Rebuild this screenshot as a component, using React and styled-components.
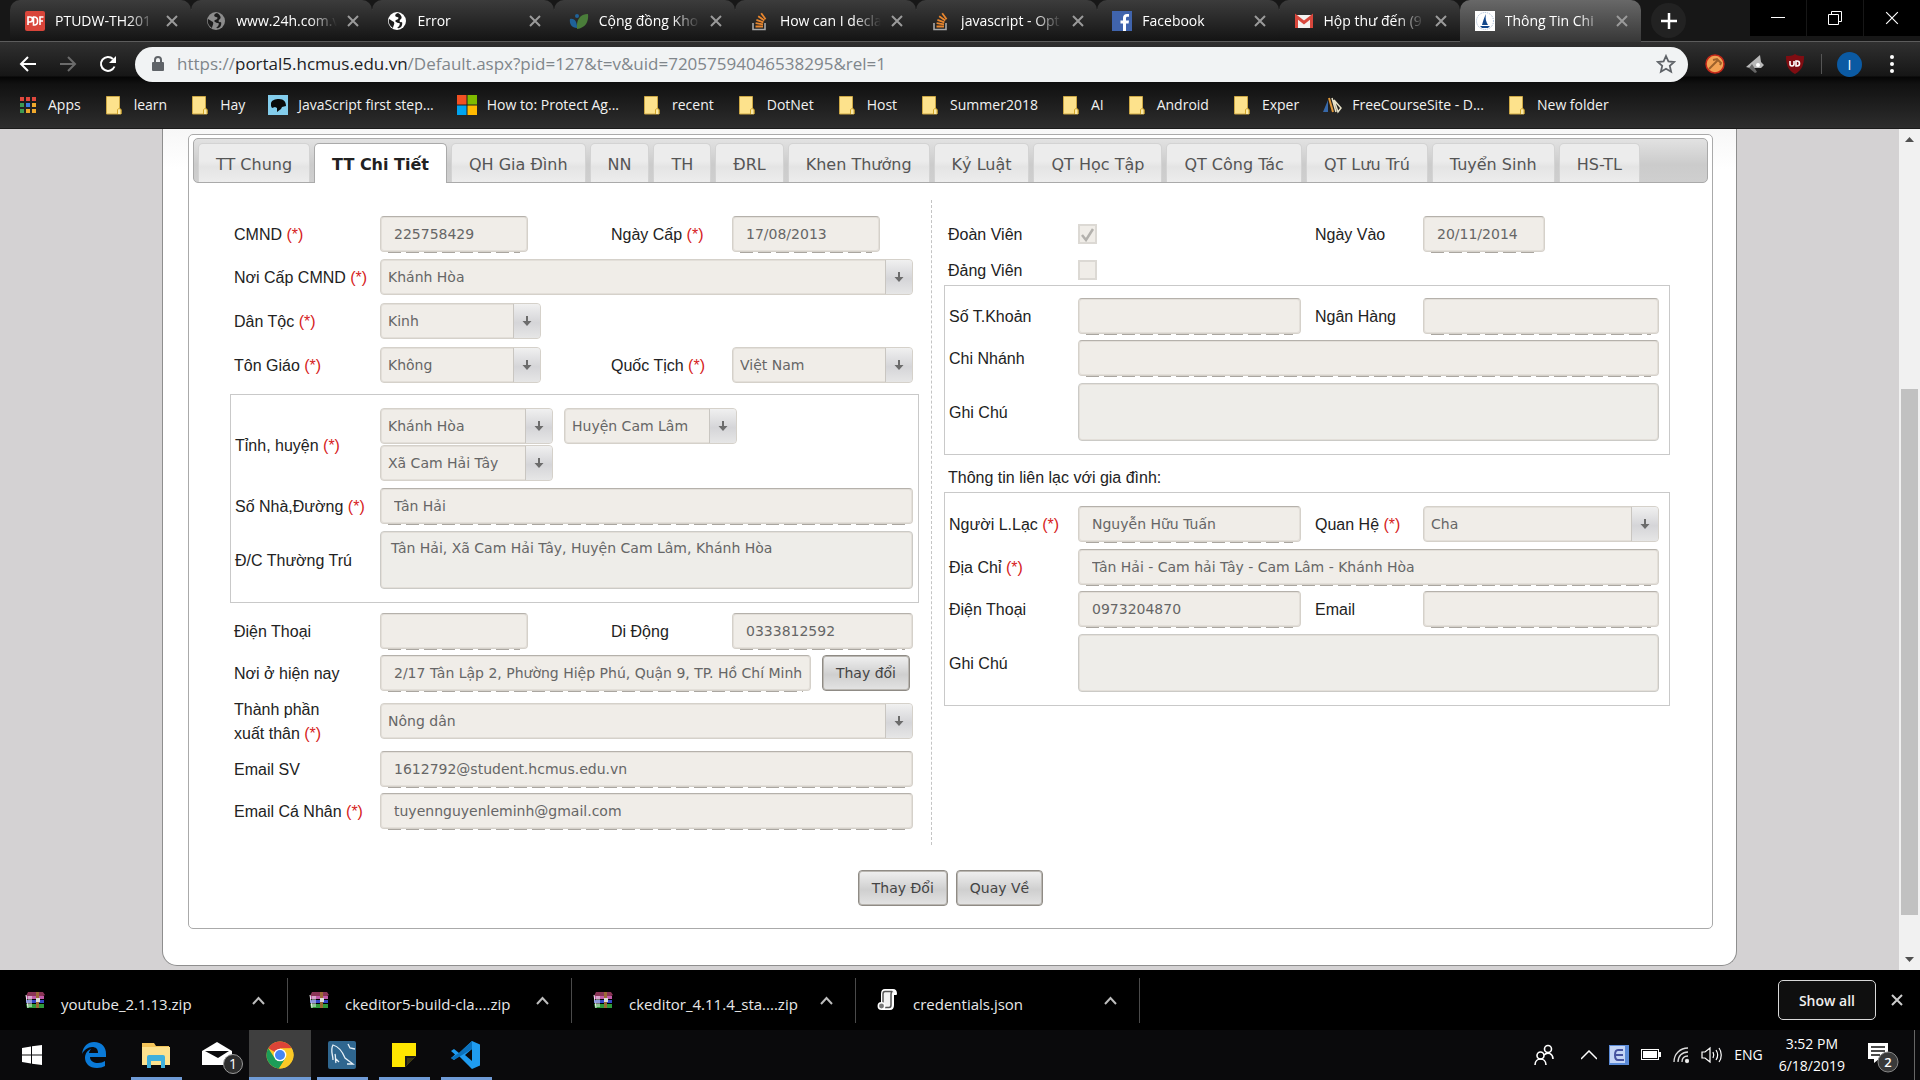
import React from 'react';
import styled, { createGlobalStyle, css } from 'styled-components';

const ui = '"Open Sans", "Noto Sans", sans-serif';
const sans = '"Liberation Sans", Arial, sans-serif';
const wide = '"DejaVu Sans", Verdana, sans-serif';

const Global = createGlobalStyle`
  *, *::before, *::after { box-sizing: border-box; }
  body { margin: 0; background: #000; font-family: ${ui}; }
  button { font: inherit; cursor: pointer; }
  svg { display: block; flex: none; }
`;

const Screen = styled.div`
  height: 100vh;
  display: flex;
  flex-direction: column;
  overflow: hidden;
`;

/* ---------- browser window ---------- */

const TabStrip = styled.header`
  display: flex;
  align-items: flex-start;
  height: 42px;
  padding-left: 10px;
  background: #171717;
  border-bottom: 1px solid #5c5c5c;
`;

const TabList = styled.div`
  display: flex;
  flex: 0 1 1631px;
  min-width: 0;
  height: 42px;
`;

const BrowserTab = styled.div`
  flex: 1 1 0;
  min-width: 0;
  display: flex;
  align-items: center;
  gap: 10px;
  height: 41px;
  padding: 0 13px 0 15px;
  border-radius: 10px 10px 0 0;
  background: linear-gradient(#3c3c3c, #141414);
  background-clip: padding-box;
  ${(p) =>
    p.$active &&
    css`
      height: 42px;
      background: linear-gradient(#686868, #373737);
    `}
`;

const TabDivider = styled.i`
  align-self: center;
  width: 1px;
  height: 25px;
  margin: 0 -1px 0 0;
  background: #5a5a5a;
`;

const TabTitle = styled.span`
  flex: 1;
  min-width: 0;
  overflow: hidden;
  white-space: nowrap;
  font-size: 14px;
  line-height: 22px;
  color: #fff;
  mask-image: linear-gradient(90deg, #000 calc(100% - 28px), transparent);
`;

const PlainButton = styled.button`
  display: flex;
  align-items: center;
  justify-content: center;
  flex: none;
  padding: 0;
  border: 0;
  background: none;
  color: inherit;
`;

const NewTab = styled(PlainButton)`
  width: 35px;
  height: 35px;
  margin: 3px 0 0 10px;
  border-radius: 50%;
  background: #222;
`;

const WindowControls = styled.div`
  display: flex;
  gap: 1px;
  margin-left: auto;
`;

const WindowButton = styled(PlainButton)`
  width: 56px;
  height: 36px;
  background: #000;
`;

const Toolbar = styled.div`
  display: flex;
  align-items: center;
  height: 42px;
  padding: 2px 18px 0 14px;
  background: linear-gradient(#303030, #161616 34px, #050505 35px, #111);
`;

const NavButtons = styled.div`
  display: flex;
  gap: 12px;
  margin-right: 13px;
`;

const NavButton = styled(PlainButton)`
  width: 28px;
  height: 28px;
`;

const AddressBar = styled.div`
  flex: 1;
  min-width: 0;
  display: flex;
  align-items: center;
  gap: 12px;
  height: 35px;
  padding: 0 12px 0 16px;
  border-radius: 18px;
  background: #f1f3f4;
`;

const Url = styled.div`
  flex: 1;
  min-width: 0;
  overflow: hidden;
  white-space: nowrap;
  font-size: 17px;
  line-height: 24px;
  color: #80868b;
  span { color: #202124; }
`;

const Extensions = styled.div`
  display: flex;
  align-items: center;
  gap: 20px;
  margin-left: 17px;
`;

const ToolbarDivider = styled.i`
  width: 1px;
  height: 20px;
  margin-left: -4px;
  background: #555;
`;

const ToolbarGap = styled.i`
  width: 1px;
  margin-right: -18px;
`;

const Avatar = styled(PlainButton)`
  width: 25px;
  height: 25px;
  border-radius: 50%;
  background: #0b5aa3;
  color: #fff;
  font-size: 14px;
  margin-left: -5px;
`;

const Bookmarks = styled.nav`
  display: flex;
  align-items: center;
  gap: 23px;
  height: 45px;
  padding: 0 18px 2px;
  background: linear-gradient(#111, #2d2d2d);
  border-bottom: 1px solid #1b1b1b;
`;

const Bookmark = styled.a`
  display: flex;
  align-items: center;
  gap: 10px;
  color: #f1f1f1;
  font-size: 14px;
  line-height: 20px;
  white-space: nowrap;
  text-decoration: none;
`;

/* ---------- web page ---------- */

const Viewport = styled.div`
  flex: 1;
  min-height: 0;
  display: flex;
  background: #d4d2d3;
`;

const PageScroll = styled.main`
  flex: 1;
  min-width: 0;
  overflow: hidden;
  padding: 0 162px;
`;

const Sheet = styled.div`
  padding: 5px 23px 36px 25px;
  border: 1px solid #8e8e8e;
  border-top: 0;
  border-radius: 0 0 15px 15px;
  background: linear-gradient(#f7f7f7, #fff 40px);
`;

const Panel = styled.section`
  padding: 3px 4px 22px;
  border: 1px solid #aaa;
  border-radius: 5px;
  background: #fff;
`;

const SectionTabs = styled.nav`
  display: flex;
  align-items: flex-end;
  gap: 4px;
  height: 45px;
  padding-left: 4px;
  border: 1px solid #aaa;
  border-radius: 5px;
  background: linear-gradient(#e2e2e2, #cbcbcb 60%, #cfcfcf);
`;

const SectionTab = styled.a`
  height: 39px;
  padding: 0 17px;
  border: 1px solid #d3d3d3;
  border-bottom: 0;
  border-radius: 5px 5px 0 0;
  background: linear-gradient(#ececec 45%, #e4e4e4 60%, #ededed);
  color: #555;
  font-family: ${wide};
  font-size: 16px;
  line-height: 41px;
  white-space: nowrap;
  text-decoration: none;
  ${(p) =>
    p.$active &&
    css`
      height: 40px;
      margin-bottom: -1px;
      border-color: #aaa;
      background: #fff;
      color: #212121;
      font-weight: bold;
    `}
`;

const Columns = styled.div`
  display: grid;
  grid-template-columns: 738fr 777fr;
  margin-top: 17px;
  font-family: ${sans};
  font-size: 16px;
  line-height: 24px;
  color: #222;
`;

const LeftColumn = styled.div`
  min-width: 0;
  padding: 13px 12px 13px 37px;
`;

const RightColumn = styled.div`
  min-width: 0;
  padding: 13px 38px 13px 12px;
  border-left: 1px dashed #c4c4c4;
`;

const rowHeights = { check: 30, input: 42, select: 44, double: 54, area: 66, stack: 81 };

const Row = styled.div`
  display: grid;
  align-items: center;
  height: ${(p) => rowHeights[p.$kind]}px;
`;

const LeftRow = styled(Row)`
  grid-template-columns: ${(p) => (p.$boxed ? 145 : 146)}px 231px 121px 1fr;
  padding: 0 ${(p) => (p.$boxed ? 5 : 6)}px 0 4px;
`;

const RightRow = styled(Row)`
  grid-template-columns: ${(p) => (p.$boxed ? 129 : 130)}px 237px 108px 1fr;
  padding: 0 ${(p) => (p.$boxed ? 10 : 11)}px 0 4px;
`;

const Box = styled.div`
  padding: 9px 0;
  margin: ${(p) => (p.$spaced ? '7px 0' : '0')};
  border: 1px solid #c9c9c9;
`;

const Caption = styled.p`
  margin: 0;
  padding: 8px 4px 0;
  line-height: 29px;
`;

const LabelText = styled.label`
  padding-top: 2px;
  white-space: nowrap;
  b { font-weight: normal; color: #d62222; }
`;

const Cell = styled.div`
  display: flex;
  align-items: center;
  gap: 11px;
  grid-column: ${(p) => (p.$span ? '2 / -1' : 'auto')};
  padding-right: ${(p) => p.$inset || 0}px;
  flex-wrap: ${(p) => (p.$wrap ? 'wrap' : 'nowrap')};
  row-gap: 1px;
`;

const control = css`
  width: 100%;
  margin: 0;
  border: 1px solid #d5d1ca;
  border-radius: 4px;
  background: #f0ede8;
  box-shadow: inset 0 0 0 1px #e3dfd9;
  color: #666;
  font-family: ${wide};
  font-size: 14px;
  opacity: 1;
`;

const InputFrame = styled.div`
  flex: ${(p) => (p.$width ? `0 1 ${p.$width}px` : '1')};
  min-width: 0;
  padding: 1px 0;
  background: repeating-linear-gradient(90deg, #aaa6a0 0 13px, transparent 13px 18px) center bottom /
    calc(100% - 16px) 1px no-repeat;
`;

const TextInput = styled.input`
  ${control}
  display: block;
  height: 36px;
  padding: 0 1px 0 13px;
  border-top-color: #b5b1ab;
`;

const TextArea = styled.textarea`
  ${control}
  display: block;
  height: 58px;
  padding: 6px 10px;
  border-color: #cbcac6;
  background: #eeede9;
  line-height: 20px;
  resize: none;
`;

const SelectFrame = styled.div`
  flex: ${(p) => (p.$width ? `0 1 ${p.$width}px` : '1')};
  min-width: 0;
  display: grid;
  grid-template-columns: 1fr 28px;
  > * { grid-row: 1; }
`;

const SelectInput = styled.select`
  ${control}
  grid-column: 1 / -1;
  height: 36px;
  padding: 0 30px 0 7px;
  appearance: none;
`;

const SelectArrow = styled.span`
  grid-column: 2;
  display: flex;
  align-items: center;
  justify-content: center;
  margin: 1px 1px 1px 0;
  border-left: 1px solid #c9c6c1;
  border-radius: 0 3px 3px 0;
  background: linear-gradient(#f0f0f0, #d5d5d8 55%, #e6e6e6);
  pointer-events: none;
`;

const CheckFrame = styled.span`
  display: grid;
  place-items: center;
  width: 19px;
  height: 20px;
  > * { grid-area: 1 / 1; }
`;

const CheckInput = styled.input`
  width: 19px;
  height: 20px;
  margin: 0;
  appearance: none;
  border: 2px solid #dcd9d4;
  background: #f0ede8;
`;

const FormButton = styled.button`
  flex: none;
  height: 36px;
  padding: 0 13px;
  border: 1px solid #8f8b85;
  border-radius: 4px;
  background: linear-gradient(#f0f0f0, #cfcfcf 55%, #e3e3e3);
  box-shadow: inset 0 0 0 1px #b9b6b1;
  color: #444;
  font-family: ${wide};
  font-size: 14px;
  white-space: nowrap;
`;

const Actions = styled.div`
  display: flex;
  justify-content: center;
  gap: 8px;
  margin-top: 25px;
`;

const Scrollbar = styled.div`
  width: 21px;
  display: flex;
  flex-direction: column;
  align-items: center;
  background: #f1f1f1;
`;

const ScrollArrow = styled(PlainButton)`
  width: 21px;
  height: 21px;
`;

const Thumb = styled.div`
  flex: 526;
  width: 17px;
  background: #c1c1c1;
`;

const Track = styled.div`
  flex: ${(p) => p.$grow};
`;

/* ---------- downloads and taskbar ---------- */

const Downloads = styled.footer`
  display: flex;
  align-items: center;
  height: 60px;
  padding: 0 16px 0 4px;
  background: #000;
`;

const Download = styled.div`
  display: flex;
  align-items: center;
  flex: 0 1 284px;
  min-width: 0;
  height: 45px;
  padding: 0 22px 0 21px;
  border-right: 1px solid #4a4a4a;
  color: #e8e8e8;
  font-size: 15px;
  line-height: 24px;
`;

const FileName = styled.span`
  flex: 1;
  padding: 7px 0 0 16px;
  white-space: nowrap;
`;

const ShowAll = styled.button`
  height: 40px;
  margin-left: auto;
  padding: 0 20px;
  border: 1px solid #d8d8d8;
  border-radius: 5px;
  background: #0f0f0f;
  color: #eee;
  font-size: 14px;
  font-weight: 600;
  white-space: nowrap;
`;

const CloseBar = styled(PlainButton)`
  width: 14px;
  height: 14px;
  margin-left: 14px;
`;

const Taskbar = styled.footer`
  display: flex;
  align-items: stretch;
  height: 50px;
  padding-left: 1px;
  background: #0a0a0c;
  color: #fff;
`;

const TaskButton = styled(PlainButton)`
  width: 62px;
  border-top: 3px solid transparent;
  border-bottom: 3px solid transparent;
  ${(p) =>
    p.$running &&
    css`
      background:
        linear-gradient(#6f9bd6, #6f9bd6) center bottom / ${p.$active ? '62px' : '51px'} 3px no-repeat border-box,
        ${p.$active ? '#3f3f3f' : 'none'};
    `}
`;

const Tray = styled.div`
  display: flex;
  align-items: center;
  margin-left: auto;
  padding-right: 5px;
  font-size: 14px;
  line-height: 22px;
`;

const TrayIcons = styled.div`
  display: flex;
  align-items: center;
  gap: 12px;
  margin: 0 11px 0 27px;
`;

const Clock = styled.div`
  margin: 0 22px 0 16px;
  text-align: center;
`;

const DesktopEdge = styled.i`
  align-self: stretch;
  width: 1px;
  margin-left: 15px;
  background: #666;
`;

/* ---------- drawings ---------- */

const Cross = ({ size = 12, color = '#9a9a9a', width = 2 }) => (
  <svg width={size} height={size} viewBox="0 0 12 12" stroke={color} strokeWidth={width}>
    <path d="M1 1l10 10M11 1L1 11" />
  </svg>
);

const PdfIcon = () => (
  <svg width="20" height="20" viewBox="0 0 20 20">
    <rect width="20" height="20" rx="2" fill="#d9453a" />
    <path
      d="M3 14V6h2a2 2 0 0 1 0 5H3M8.500 14V6h1a3 3 0 0 1 3 3v2a3 3 0 0 1-3 3zM15 14V6h3.500M15 10h3"
      fill="none" stroke="#fff" strokeWidth="1.600"
    />
  </svg>
);

const Globe = ({ color }) => (
  <svg width="20" height="20" viewBox="0 0 20 20">
    <circle cx="10" cy="10" r="9" fill={color} />
    <path d="M11 2c-4 1-3 4-1 4 3 0 1 3-1 3-2 1 1 3 3 3s0 4-2 5c4 1 6-3 5-6-3 1-3-2-1-3 2-2-1-5-3-6zM2 8c2 1 3 2 5 3 1 2-1 4-1 6-3-2-5-5-4-9z" fill="#1c1c1c" />
  </svg>
);

const Leaf = () => (
  <svg width="20" height="20" viewBox="0 0 20 20">
    <path d="M8 18C7 9 11 3 19 3c1 8-3 14-11 15z" fill="#4a7d3a" />
    <path d="M1 8c5-1 7 3 7 9-5 0-8-4-7-9z" fill="#1f6298" />
    <circle cx="8" cy="5" r="2" fill="#1f6298" />
  </svg>
);

const StackIcon = () => (
  <svg width="20" height="20" viewBox="0 0 20 20" fill="none">
    <path d="M3 12v6.500h12V12" stroke="#a9a9a9" strokeWidth="1.600" />
    <path d="M5.500 15.500h7.500M5.600 12.200l7.400 1.200M6.400 8.800l7 2.500M8.200 5.200l6.100 4.200M11.200 2.200l4.400 6" stroke="#e8862e" strokeWidth="1.800" />
  </svg>
);

const FacebookIcon = () => (
  <svg width="20" height="20" viewBox="0 0 20 20">
    <rect width="20" height="20" fill="#4064ac" />
    <path d="M11 20v-7.500H8.500v-3H11V7c0-2.800 1.500-4 4-4h2v2.800h-1.500c-1.200 0-1.500.5-1.500 1.600v2.100h3l-.4 3H14V20z" fill="#fff" />
  </svg>
);

const GmailIcon = () => (
  <svg width="20" height="20" viewBox="0 0 20 20">
    <rect x="1" y="4" width="18" height="13" rx="1" fill="#f3f1ef" />
    <path d="M2.500 17V5.500L10 11.500l7.500-6V17" fill="none" stroke="#d8473c" strokeWidth="3" />
  </svg>
);

const SchoolIcon = () => (
  <svg width="20" height="20" viewBox="0 0 20 20">
    <rect width="20" height="20" fill="#fff" />
    <circle cx="10" cy="10" r="8.500" fill="none" stroke="#9fb6d2" strokeDasharray="1 1" />
    <path d="M11 3c-1 4 0 8 2 11H7c1-4 2-7 4-11zM5 15h10l-2 2H7z" fill="#13478b" />
  </svg>
);

const FolderIcon = () => (
  <svg width="20" height="20" viewBox="0 0 20 20">
    <path d="M2.500 1.500h13v12l1.500 1v4.500H2.500z" fill="#fde28c" stroke="#cda845" />
    <path d="M13.500 19v-4.500l1.500-1 2 1V19" fill="#fbeaa9" stroke="#d6a92c" />
  </svg>
);

const AppsIcon = () => {
  const colors = ['#e0483d', '#e0483d', '#e0483d', '#3e9a52', '#3a7be0', '#f0a92c', '#3e9a52', '#f0a92c', '#f0a92c'];
  return (
    <svg width="20" height="20" viewBox="0 0 20 20">
      {colors.map((c, i) => (
        <rect key={i} x={2 + (i % 3) * 6} y={2 + Math.floor(i / 3) * 6} width="4" height="4" fill={c} />
      ))}
    </svg>
  );
};

const MdnIcon = () => (
  <svg width="20" height="20" viewBox="0 0 20 20">
    <rect width="20" height="20" fill="#83cdec" />
    <path d="M3 8c1-3 4-4 8-4 5 0 7 3 7 7l-4 1-1 2-4 3 0-4-2-1-3 1-1-2z" fill="#0a0a0a" />
  </svg>
);

const WindowsColor = () => (
  <svg width="20" height="20" viewBox="0 0 20 20">
    <rect width="9.500" height="9.500" fill="#f25022" />
    <rect x="10.500" width="9.500" height="9.500" fill="#7fba00" />
    <rect y="10.500" width="9.500" height="9.500" fill="#00a4ef" />
    <rect x="10.500" y="10.500" width="9.500" height="9.500" fill="#ffb900" />
  </svg>
);

const SailIcon = () => (
  <svg width="20" height="20" viewBox="0 0 20 20">
    <path d="M1 17L6 5v12z" fill="#3768a8" />
    <path d="M7 3l4 14" stroke="#e29a3b" strokeWidth="2" />
    <path d="M10 3l4 14M12 5l7 8-3 4z" fill="none" stroke="#e8e2c8" strokeWidth="1.500" />
  </svg>
);

const DownArrow = () => (
  <svg width="12" height="14" viewBox="0 0 12 14">
    <path d="M5 2h2v5h3.500L6 12 1.500 7H5z" fill="#6c6c6c" />
  </svg>
);

const ArchiveIcon = () => (
  <svg width="20" height="18" viewBox="0 0 20 18">
    <path d="M3 1h15l2 3-2 1H1z" fill="#8b3557" />
    <path d="M1 5h18v3H1z" fill="#c05aa8" />
    <path d="M1 9h18v3H1z" fill="#3348c8" />
    <path d="M1 13h18v4H2z" fill="#2f9a3a" />
    <path d="M1 4l2 13M4 5v11M6 5v11" stroke="#eee" />
    <path d="M11 1h3v16h-3z" fill="#9b6b35" />
    <rect x="11" y="7" width="4" height="4" fill="#ddd" />
  </svg>
);

const ScriptIcon = () => (
  <svg width="20" height="22" viewBox="0 0 20 22" fill="none" strokeLinejoin="round">
    <path d="M5 14V5c0-3 1-4 3-4h8c2 0 3 1 3 4h-3v11c0 3-1 4-3 4H5" fill="#f2f2f2" stroke="#fff" strokeWidth="2" />
    <path d="M6 14V5c0-2 1-2.500 2-2.500h7c-1 1-1 2-1 3V16c0 2-1 2.500-2 2.500H8" fill="#f2f2f2" stroke="#555" strokeWidth="1.500" />
    <circle cx="4.500" cy="17" r="3.200" fill="#777" stroke="#fff" strokeWidth="1.500" />
  </svg>
);

const Chevron = () => (
  <svg width="13" height="9" viewBox="0 0 13 9" fill="none" stroke="#bdbdbd" strokeWidth="2">
    <path d="M1 8l5.500-6L12 8" />
  </svg>
);

const EdgeIcon = () => (
  <svg width="26" height="28" viewBox="0 0 26 28">
    <path d="M1 13C2 5 7 1 13 1c8 0 12 5 12 12v3H9c0 4 4 6 8 6 3 0 5-1 7-2v5c-2 1-5 2-8 2-8 0-12-5-12-10 0-5 3-8 6-9-1 1-2 3-2 4h9c0-4-2-6-6-6-4 0-8 3-10 7z" fill="#0a7ad8" />
  </svg>
);

const ExplorerIcon = () => (
  <svg width="28" height="26" viewBox="0 0 28 26">
    <path d="M0 1h12l2 3h13v18H0z" fill="#f4c55a" />
    <path d="M0 5h28v18H0z" fill="#fde28e" />
    <path d="M5 26V15a2 2 0 0 1 2-2h14a2 2 0 0 1 2 2v11h-4v-7h-10v7z" fill="#3fb0dc" />
  </svg>
);

const MailIcon = () => (
  <svg width="54" height="38" viewBox="0 0 54 38">
    <path d="M11 15L26 6l15 9v14H11z" fill="#fff" />
    <path d="M14 15h24L27 22z" fill="#0a0a0c" />
    <circle cx="42" cy="28" r="9.500" fill="#2e2e2e" stroke="#999" />
    <text x="42" y="33" textAnchor="middle" fill="#fff" fontSize="14" fontFamily={ui}>1</text>
  </svg>
);

const ChromeIcon = () => (
  <svg width="28" height="28" viewBox="0 0 28 28">
    <circle cx="14" cy="14" r="13.500" fill="#fbc926" />
    <path d="M14 14L2.300 7.200A13.500 13.500 0 0 1 25.700 7.200L14 7.500z" fill="#dc4437" />
    <path d="M2.300 7.200A13.500 13.500 0 0 0 13 27.500L19.500 17 14 14 8 16z" fill="#1c9d58" />
    <path d="M14 7.500h11.800a13.500 13.500 0 0 1-12.800 20l7-10.500z" fill="#fbc926" />
    <circle cx="14" cy="14" r="6.300" fill="#fff" />
    <circle cx="14" cy="14" r="5" fill="#4486f4" />
  </svg>
);

const DolphinIcon = () => (
  <svg width="28" height="28" viewBox="0 0 28 28">
    <rect width="28" height="28" rx="2" fill="#2f668f" />
    <path d="M5 19c0-5-3-10 0-15 7 2 10 8 12 13l8 6-6 0M8 22c-1-3 0-6-1-9M11 21l-3-3M20 3l2 4 5 1" fill="none" stroke="#e8f1f7" strokeWidth="1.300" />
  </svg>
);

const NotesIcon = () => (
  <svg width="24" height="24" viewBox="0 0 24 24">
    <path d="M0 0h24v24H0z" fill="#ffe600" />
    <path d="M13 24V13h11z" fill="#1a1a1a" />
    <path d="M24 13v11H13z" fill="#0a0a0c" />
    <path d="M13 24V13h11z" fill="#1a1a1a" />
    <path d="M15 22v-7h7z" fill="#ffe600" opacity=".15" />
  </svg>
);

const CodeIcon = () => (
  <svg width="30" height="30" viewBox="0 0 30 30">
    <path d="M21 1l8 3.500v21L21 29 8 16l-5 4-3-2 4-3.500L0 11l3-2 5 4zM21 9l-7 6 7 6z" fill="#1f9cf0" fillRule="evenodd" />
    <path d="M0 18l3 2L21 9V1L8 13z" fill="#0b72bd" />
  </svg>
);

const StartIcon = () => (
  <svg width="20" height="22" viewBox="0 0 20 22" fill="#fff">
    <path d="M0 4l9-1.500v8H0zM10 2.300L20 1v9.500H10zM0 11.500h9v8L0 18zM10 11.500h10V21l-10-1.300z" />
  </svg>
);

/* ---------- form parts ---------- */

const Label = ({ id, text, required }) => (
  <LabelText htmlFor={id}>
    {text}
    {required && <b> (*)</b>}
  </LabelText>
);

const Field = ({ id, value = '', width }) => (
  <InputFrame $width={width}>
    <TextInput id={id} type="text" defaultValue={value} disabled />
  </InputFrame>
);

const Picker = ({ id, value, width, title }) => (
  <SelectFrame $width={width}>
    <SelectInput id={id} aria-label={title} defaultValue={value} disabled>
      <option>{value}</option>
    </SelectInput>
    <SelectArrow>
      <DownArrow />
    </SelectArrow>
  </SelectFrame>
);

const Check = ({ id, checked }) => (
  <CheckFrame>
    <CheckInput id={id} type="checkbox" defaultChecked={checked} disabled />
    {checked && (
      <svg width="15" height="15" viewBox="0 0 15 15" fill="none" stroke="#b3b1ad" strokeWidth="2.500">
        <path d="M2 8l4 5 7-11" />
      </svg>
    )}
  </CheckFrame>
);

const browserTabs = [
  ['PTUDW-TH201', <PdfIcon />],
  ['www.24h.com.v', <Globe color="#8c8c8c" />],
  ['Error', <Globe color="#fff" />],
  ['Cộng đồng Kho', <Leaf />],
  ['How can I decla', <StackIcon />],
  ['javascript - Opt', <StackIcon />],
  ['Facebook', <FacebookIcon />],
  ['Hộp thư đến (9', <GmailIcon />],
  ['Thông Tin Chi', <SchoolIcon />],
];

const bookmarks = [
  ['Apps', <AppsIcon />],
  ['learn', <FolderIcon />],
  ['Hay', <FolderIcon />],
  ['JavaScript first step...', <MdnIcon />],
  ['How to: Protect Ag...', <WindowsColor />],
  ['recent', <FolderIcon />],
  ['DotNet', <FolderIcon />],
  ['Host', <FolderIcon />],
  ['Summer2018', <FolderIcon />],
  ['AI', <FolderIcon />],
  ['Android', <FolderIcon />],
  ['Exper', <FolderIcon />],
  ['FreeCourseSite - D...', <SailIcon />],
  ['New folder', <FolderIcon />],
];

const sectionTabs = [
  'TT Chung', 'TT Chi Tiết', 'QH Gia Đình', 'NN', 'TH', 'ĐRL', 'Khen Thưởng', 'Kỷ Luật',
  'QT Học Tập', 'QT Công Tác', 'QT Lưu Trú', 'Tuyển Sinh', 'HS-TL',
];

const downloads = [
  ['youtube_2.1.13.zip', <ArchiveIcon />],
  ['ckeditor5-build-cla....zip', <ArchiveIcon />],
  ['ckeditor_4.11.4_sta....zip', <ArchiveIcon />],
  ['credentials.json', <ScriptIcon />],
];

const tasks = [
  { name: 'Start', icon: <StartIcon /> },
  { name: 'Edge', icon: <EdgeIcon /> },
  { name: 'File Explorer', icon: <ExplorerIcon />, running: true },
  { name: 'Mail', icon: <MailIcon /> },
  { name: 'Chrome', icon: <ChromeIcon />, running: true, active: true },
  { name: 'MySQL Workbench', icon: <DolphinIcon />, running: true },
  { name: 'Sticky Notes', icon: <NotesIcon />, running: true },
  { name: 'Visual Studio Code', icon: <CodeIcon />, running: true },
];

function BrowserChrome() {
  return (
    <>
      <TabStrip>
        <TabList>
          {browserTabs.map(([title, icon], i) => (
            <React.Fragment key={title}>
              {i > 0 && i < 8 && <TabDivider />}
              <BrowserTab $active={i === 8}>
                {icon}
                <TabTitle>{title}</TabTitle>
                <PlainButton aria-label="Close tab"><Cross /></PlainButton>
              </BrowserTab>
            </React.Fragment>
          ))}
        </TabList>
        <NewTab aria-label="New tab">
          <svg width="16" height="16" viewBox="0 0 16 16" stroke="#fff" strokeWidth="2.500"><path d="M8 0v16M0 8h16" /></svg>
        </NewTab>
        <WindowControls>
          <WindowButton aria-label="Minimize">
            <svg width="14" height="14" viewBox="0 0 14 14" stroke="#fff"><path d="M0 6.500h14" /></svg>
          </WindowButton>
          <WindowButton aria-label="Restore">
            <svg width="14" height="14" viewBox="0 0 14 14" fill="none" stroke="#fff"><path d="M.5 3.500h10v10H.5zM3.500 3.500v-3h10v10h-3" /></svg>
          </WindowButton>
          <WindowButton aria-label="Close">
            <Cross size={14} color="#fff" width={1} />
          </WindowButton>
        </WindowControls>
      </TabStrip>
      <Toolbar>
        <NavButtons>
          <NavButton aria-label="Back">
            <svg width="18" height="18" viewBox="0 0 18 18" fill="none" stroke="#fff" strokeWidth="2"><path d="M17 9H2M9 2L2 9l7 7" /></svg>
          </NavButton>
          <NavButton aria-label="Forward">
            <svg width="18" height="18" viewBox="0 0 18 18" fill="none" stroke="#6b6b6b" strokeWidth="2"><path d="M1 9h15M9 2l7 7-7 7" /></svg>
          </NavButton>
          <NavButton aria-label="Reload">
            <svg width="18" height="18" viewBox="0 0 18 18"><path d="M15.500 11.500A7 7 0 1 1 14 4" fill="none" stroke="#fff" strokeWidth="2" /><path d="M17 1v7h-7z" fill="#fff" /></svg>
          </NavButton>
        </NavButtons>
        <AddressBar>
          <svg width="14" height="16" viewBox="0 0 14 16"><rect x="1" y="6" width="12" height="9" rx="1" fill="#5f6368" /><path d="M4 6V4a3 3 0 0 1 6 0v2" fill="none" stroke="#5f6368" strokeWidth="2" /></svg>
          <Url role="textbox" aria-label="Address">
            https://<span>portal5.hcmus.edu.vn</span>/Default.aspx?pid=127&amp;t=v&amp;uid=72057594046538295&amp;rel=1
          </Url>
          <svg width="20" height="20" viewBox="0 0 20 20" fill="none" stroke="#5f6368" strokeWidth="1.800"><path d="M10 2l2.400 5.400 5.800.6-4.400 3.900 1.300 5.800L10 14.700l-5.100 3 1.300-5.800L1.800 8l5.800-.6z" /></svg>
        </AddressBar>
        <Extensions>
          <svg width="20" height="20" viewBox="0 0 20 20"><circle cx="10" cy="10" r="9" fill="#f2a254" stroke="#c5281a" strokeWidth="1.500" /><path d="M4 15l9-9M8 6l4-1 4 4-1 2" fill="none" stroke="#9d612b" strokeWidth="2" /></svg>
          <svg width="20" height="20" viewBox="0 0 20 20"><path d="M1 13L15 1l1 7 3 3-3 3H5z" fill="#b8b8b8" /><path d="M7 10l5 8-2 1-6-5z" fill="#666" /><circle cx="13" cy="11" r="2" fill="#fff" /></svg>
          <svg width="20" height="20" viewBox="0 0 20 20"><path d="M10 0c3 2 5 2 9 2 0 9-2 14-9 18C3 16 1 11 1 2c4 0 6 0 9-2z" fill="#800d12" /><path d="M5 7v3a2 2 0 0 0 4 0V7M11 7v5h1a2.500 2.500 0 0 0 0-5z" fill="none" stroke="#fff" strokeWidth="1.600" /></svg>
          <ToolbarDivider />
        </Extensions>
        <Extensions>
          <ToolbarGap />
          <Avatar aria-label="Profile">I</Avatar>
          <PlainButton aria-label="Menu">
            <svg width="20" height="20" viewBox="0 0 20 20" fill="#fff"><circle cx="10" cy="3" r="2" /><circle cx="10" cy="10" r="2" /><circle cx="10" cy="17" r="2" /></svg>
          </PlainButton>
        </Extensions>
      </Toolbar>
      <Bookmarks>
        {bookmarks.map(([name, icon]) => (
          <Bookmark key={name} href="#">{icon}{name}</Bookmark>
        ))}
      </Bookmarks>
    </>
  );
}

function PersonalDetails() {
  return (
    <LeftColumn>
      <LeftRow $kind="input">
        <Label id="cmnd" text="CMND" required />
        <Cell><Field id="cmnd" value="225758429" width={148} /></Cell>
        <Label id="ngaycap" text="Ngày Cấp" required />
        <Cell><Field id="ngaycap" value="17/08/2013" width={148} /></Cell>
      </LeftRow>
      <LeftRow $kind="select">
        <Label id="noicap" text="Nơi Cấp CMND" required />
        <Cell $span><Picker id="noicap" value="Khánh Hòa" /></Cell>
      </LeftRow>
      <LeftRow $kind="select">
        <Label id="dantoc" text="Dân Tộc" required />
        <Cell><Picker id="dantoc" value="Kinh" width={161} /></Cell>
      </LeftRow>
      <LeftRow $kind="select">
        <Label id="tongiao" text="Tôn Giáo" required />
        <Cell><Picker id="tongiao" value="Không" width={161} /></Cell>
        <Label id="quoctich" text="Quốc Tịch" required />
        <Cell><Picker id="quoctich" value="Việt Nam" /></Cell>
      </LeftRow>
      <Box $spaced>
        <LeftRow $kind="stack" $boxed>
          <Label id="tinh" text="Tỉnh, huyện" required />
          <Cell $span $wrap>
            <Picker id="tinh" value="Khánh Hòa" width={173} />
            <Picker id="huyen" title="Huyện" value="Huyện Cam Lâm" width={173} />
            <Picker id="xa" title="Xã" value="Xã Cam Hải Tây" width={173} />
          </Cell>
        </LeftRow>
        <LeftRow $kind="input" $boxed>
          <Label id="sonha" text="Số Nhà,Đường" required />
          <Cell $span><Field id="sonha" value="Tân Hải" /></Cell>
        </LeftRow>
        <LeftRow $kind="area" $boxed>
          <Label id="thuongtru" text="Đ/C Thường Trú" />
          <Cell $span>
            <TextArea id="thuongtru" defaultValue="Tân Hải, Xã Cam Hải Tây, Huyện Cam Lâm, Khánh Hòa" disabled />
          </Cell>
        </LeftRow>
      </Box>
      <LeftRow $kind="input">
        <Label id="dienthoai" text="Điện Thoại" />
        <Cell><Field id="dienthoai" width={148} /></Cell>
        <Label id="didong" text="Di Động" />
        <Cell><Field id="didong" value="0333812592" /></Cell>
      </LeftRow>
      <LeftRow $kind="input">
        <Label id="noio" text="Nơi ở hiện nay" />
        <Cell $span $inset={3}>
          <Field id="noio" value="2/17 Tân Lập 2, Phường Hiệp Phú, Quận 9, TP. Hồ Chí Minh" />
          <FormButton type="button">Thay đổi</FormButton>
        </Cell>
      </LeftRow>
      <LeftRow $kind="double">
        <LabelText htmlFor="thanhphan">Thành phần<br />xuất thân <b>(*)</b></LabelText>
        <Cell $span><Picker id="thanhphan" value="Nông dân" /></Cell>
      </LeftRow>
      <LeftRow $kind="input">
        <Label id="emailsv" text="Email SV" />
        <Cell $span><Field id="emailsv" value="1612792@student.hcmus.edu.vn" /></Cell>
      </LeftRow>
      <LeftRow $kind="input">
        <Label id="emailcn" text="Email Cá Nhân" required />
        <Cell $span><Field id="emailcn" value="tuyennguyenleminh@gmail.com" /></Cell>
      </LeftRow>
    </LeftColumn>
  );
}

function ContactDetails() {
  return (
    <RightColumn>
      <RightRow $kind="input">
        <Label id="doanvien" text="Đoàn Viên" />
        <Cell><Check id="doanvien" checked /></Cell>
        <Label id="ngayvao" text="Ngày Vào" />
        <Cell><Field id="ngayvao" value="20/11/2014" width={122} /></Cell>
      </RightRow>
      <RightRow $kind="check">
        <Label id="dangvien" text="Đảng Viên" />
        <Cell><Check id="dangvien" /></Cell>
      </RightRow>
      <Box>
        <RightRow $kind="input" $boxed>
          <Label id="sotk" text="Số T.Khoản" />
          <Cell $inset={14}><Field id="sotk" /></Cell>
          <Label id="nganhang" text="Ngân Hàng" />
          <Cell><Field id="nganhang" /></Cell>
        </RightRow>
        <RightRow $kind="input" $boxed>
          <Label id="chinhanh" text="Chi Nhánh" />
          <Cell $span><Field id="chinhanh" /></Cell>
        </RightRow>
        <RightRow $kind="area" $boxed>
          <Label id="ghichu1" text="Ghi Chú" />
          <Cell $span><TextArea id="ghichu1" disabled /></Cell>
        </RightRow>
      </Box>
      <Caption>Thông tin liên lạc với gia đình:</Caption>
      <Box>
        <RightRow $kind="select" $boxed>
          <Label id="nguoill" text="Người L.Lạc" required />
          <Cell $inset={14}><Field id="nguoill" value="Nguyễn Hữu Tuấn" /></Cell>
          <Label id="quanhe" text="Quan Hệ" required />
          <Cell><Picker id="quanhe" value="Cha" /></Cell>
        </RightRow>
        <RightRow $kind="input" $boxed>
          <Label id="diachi" text="Địa Chỉ" required />
          <Cell $span><Field id="diachi" value="Tân Hải - Cam hải Tây - Cam Lâm - Khánh Hòa" /></Cell>
        </RightRow>
        <RightRow $kind="input" $boxed>
          <Label id="dienthoai2" text="Điện Thoại" />
          <Cell $inset={14}><Field id="dienthoai2" value="0973204870" /></Cell>
          <Label id="email2" text="Email" />
          <Cell><Field id="email2" /></Cell>
        </RightRow>
        <RightRow $kind="area" $boxed>
          <Label id="ghichu2" text="Ghi Chú" />
          <Cell $span><TextArea id="ghichu2" disabled /></Cell>
        </RightRow>
      </Box>
    </RightColumn>
  );
}

function SystemTray() {
  return (
    <Tray>
      <svg width="20" height="22" viewBox="0 0 20 22" fill="none" stroke="#fff" strokeWidth="1.600">
        <circle cx="14" cy="5" r="3.500" /><circle cx="6.500" cy="11.500" r="3.500" /><path d="M1 21c0-8 11-8 11 0M10 11c4-4 9-1 9 4" />
      </svg>
      <TrayIcons>
        <svg width="16" height="10" viewBox="0 0 16 10" fill="none" stroke="#fff" strokeWidth="1.500"><path d="M0 9l8-8 8 8" /></svg>
        <svg width="20" height="20" viewBox="0 0 20 20"><rect width="20" height="20" fill="#5b8bd8" /><rect x="1" y="1" width="15" height="17" fill="#c4d5f6" /><path d="M14 5H9c-4 0-4 10 0 10h6M6 10h8" fill="none" stroke="#46539f" strokeWidth="2" /></svg>
        <svg width="20" height="14" viewBox="0 0 20 14"><rect x=".5" y="1.500" width="17" height="10" fill="none" stroke="#fff" /><rect x="2" y="3" width="14" height="7" fill="#fff" /><rect x="18" y="4" width="2" height="5" fill="#fff" /></svg>
        <svg width="16" height="18" viewBox="0 0 16 18" fill="none" stroke="#ddd" strokeWidth="1.300"><path d="M1 16C1 8 7 2 15 2M5 16c0-6 4-10 10-10M9 16c0-4 2-6 6-6" /><circle cx="14" cy="15" r="1.500" fill="#fff" /></svg>
        <svg width="22" height="18" viewBox="0 0 22 18" fill="none" stroke="#fff" strokeWidth="1.200"><path d="M1 6h3l5-4v14l-5-4H1zM12 6c1 2 1 4 0 6M15 4c2 3 2 7 0 10M18 2c3 4 3 10 0 14" /></svg>
      </TrayIcons>
      <span>ENG</span>
      <Clock>3:52 PM<br />6/18/2019</Clock>
      <svg width="32" height="36" viewBox="0 0 32 36">
        <path d="M1 6h20v16h-9l-5 4v-4H1z" fill="#fff" />
        <path d="M4 10h14M4 14h14M4 18h9" stroke="#111" strokeWidth="1.300" />
        <circle cx="21" cy="25" r="10" fill="#3a3a3a" stroke="#888" />
        <text x="21" y="30" textAnchor="middle" fill="#fff" fontSize="13" fontWeight="600" fontFamily={ui}>2</text>
      </svg>
      <DesktopEdge />
    </Tray>
  );
}

export default function App() {
  return (
    <Screen>
      <Global />
      <BrowserChrome />
      <Viewport>
        <PageScroll>
          <Sheet>
            <Panel>
              <SectionTabs>
                {sectionTabs.map((name, i) => (
                  <SectionTab key={name} href="#" $active={i === 1}>{name}</SectionTab>
                ))}
              </SectionTabs>
              <Columns>
                <PersonalDetails />
                <ContactDetails />
              </Columns>
              <Actions>
                <FormButton type="button">Thay Đổi</FormButton>
                <FormButton type="button">Quay Về</FormButton>
              </Actions>
            </Panel>
          </Sheet>
        </PageScroll>
        <Scrollbar>
          <ScrollArrow aria-label="Scroll up">
            <svg width="9" height="5" viewBox="0 0 9 5" fill="#505050"><path d="M0 5l4.500-5L9 5z" /></svg>
          </ScrollArrow>
          <Track $grow={239} />
          <Thumb />
          <Track $grow={34} />
          <ScrollArrow aria-label="Scroll down">
            <svg width="9" height="5" viewBox="0 0 9 5" fill="#505050"><path d="M0 0l4.500 5L9 0z" /></svg>
          </ScrollArrow>
        </Scrollbar>
      </Viewport>
      <Downloads>
        {downloads.map(([name, icon]) => (
          <Download key={name}>
            {icon}
            <FileName>{name}</FileName>
            <PlainButton aria-label="Options"><Chevron /></PlainButton>
          </Download>
        ))}
        <ShowAll>Show all</ShowAll>
        <CloseBar aria-label="Close downloads"><Cross color="#ccc" /></CloseBar>
      </Downloads>
      <Taskbar>
        {tasks.map((t) => (
          <TaskButton key={t.name} aria-label={t.name} $running={t.running} $active={t.active}>{t.icon}</TaskButton>
        ))}
        <SystemTray />
      </Taskbar>
    </Screen>
  );
}
